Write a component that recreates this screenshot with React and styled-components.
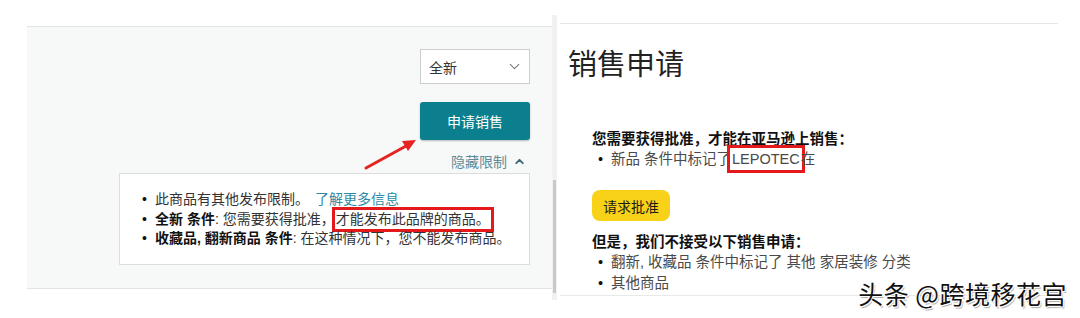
import styled, { createGlobalStyle } from "styled-components";
import { ChevronDown, ChevronUp } from "lucide-react";

const GlobalStyle = createGlobalStyle`
  html, body {
    margin: 0;
    padding: 0;
    background: #fff;
  }
  body {
    font-family: "Liberation Sans", "Noto Sans CJK SC", sans-serif;
    color: #333;
  }
`;

const Page = styled.div`
  position: relative;
  width: 1080px;
  height: 318px;
  overflow: hidden;
  display: flex;
  align-items: flex-start;
`;

/* left: listing page */
const LeftCol = styled.div`
  padding: 26px 0 0 27px;
`;

const Panel = styled.div`
  box-sizing: border-box;
  width: 525px;
  height: 263px;
  background: #f7f8f8;
  border-top: 1px solid #e4e4e4;
  border-bottom: 1px solid #e4e4e4;
  padding: 22px 22px 0 0;
  display: flex;
  flex-direction: column;
  align-items: flex-end;
`;

const Select = styled.div`
  box-sizing: border-box;
  width: 110px;
  height: 35px;
  background: #fff;
  border: 1px solid #cdcdcd;
  display: flex;
  align-items: center;
  justify-content: space-between;
  padding: 0 6px 0 8px;
  font-size: 14px;
  color: #333;
`;

const SellButton = styled.div`
  box-sizing: border-box;
  margin-top: 18px;
  width: 110px;
  height: 38px;
  border-radius: 3px;
  background: #0b7f8e;
  box-shadow: 0 1px 2px rgba(0, 0, 0, 0.25);
  color: #fff;
  font-size: 14px;
  display: flex;
  align-items: center;
  justify-content: center;
`;

const HideLink = styled.div`
  margin-top: 12px;
  margin-right: 4px;
  height: 18px;
  display: flex;
  align-items: center;
  gap: 6px;
  font-size: 14px;
  color: #5e8c99;
`;

const InfoBox = styled.div`
  box-sizing: border-box;
  margin-top: 3px;
  width: 411px;
  height: 92px;
  background: #fff;
  border: 1px solid #dcdcdc;
  padding: 16px 0 0 22px;
`;

const List = styled.ul`
  margin: 0;
  padding: 0;
  list-style: none;
`;

const Item = styled.li`
  display: flex;
  font-size: ${(p) => p.$size || "14px"};
  line-height: ${(p) => p.$lh || "19.5px"};
  color: ${(p) => p.$color || "#333"};
  white-space: nowrap;

  &::before {
    content: "•";
    color: #111;
    width: 13px;
    flex: none;
  }
`;

const Strong = styled.b`
  color: #111;
  font-weight: 700;
`;

const Link = styled.span`
  color: #2f8aa6;
  margin-left: 6px;
`;

const Marked = styled.span`
  outline: 3px solid #e3191b;
  outline-offset: ${(p) => p.$offset || "0px"};
  padding: 0 1px;
`;

/* scrollbar between the two screenshots */
const Track = styled.div`
  margin-top: 15px;
  width: 5px;
  height: 285px;
  background: #f1f1f1;
  display: flex;
  justify-content: center;
`;

const Thumb = styled.div`
  margin-top: 165px;
  width: 3px;
  height: 113px;
  background: #c9c9c9;
`;

/* right: sell request */
const RightCol = styled.div`
  box-sizing: border-box;
  margin: 23px 0 0 3px;
  width: 498px;
  height: 273px;
  border-top: 1px solid #e6e6e6;
  border-bottom: 1px solid #e9e9e9;
  padding-left: 8px;
`;

const Title = styled.h1`
  margin: 21px 0 0;
  font-size: 29px;
  line-height: 40px;
  font-weight: 400;
  color: #222;
`;

const Body = styled.div`
  padding-left: 24px;
`;

const Heading = styled.div`
  margin-top: ${(p) => p.$mt || "0px"};
  font-size: 14.5px;
  line-height: 20px;
  font-weight: 700;
  color: #111;
`;

const RightList = styled(List)`
  padding-left: 6px;
`;

const ApproveButton = styled.div`
  margin: 21px 0 11px;
  width: 78px;
  height: 31px;
  border-radius: 8px;
  background: #f8d218;
  color: #1a1a1a;
  font-size: 14px;
  display: flex;
  align-items: center;
  justify-content: center;
`;

const Arrow = styled.svg`
  position: absolute;
  left: 0;
  top: 0;
  pointer-events: none;
`;

const Watermark = styled.div`
  position: absolute;
  right: 13px;
  top: 278px;
  font-family: "Noto Sans CJK SC", sans-serif;
  font-size: 25px;
  line-height: 30px;
  color: #111;
  letter-spacing: 0.5px;
  text-shadow: 1px 1px 0 #fff, -1px -1px 0 #fff, 1px -1px 0 #fff,
    -1px 1px 0 #fff, 1.5px 1.5px 1px rgba(0, 0, 0, 0.35);
`;

export default function App() {
  return (
    <Page>
      <GlobalStyle />
      <LeftCol>
        <Panel>
          <Select>
            <span>全新</span>
            <ChevronDown size={17} color="#7a7a7a" strokeWidth={1.6} />
          </Select>
          <SellButton>申请销售</SellButton>
          <HideLink>
            隐藏限制
            <ChevronUp size={13} color="#3f6877" strokeWidth={3.5} />
          </HideLink>
          <InfoBox>
            <List>
              <Item>
                此商品有其他发布限制。<Link>了解更多信息</Link>
              </Item>
              <Item>
                <Strong>全新 条件</Strong>: 您需要获得批准，
                <Marked>才能发布此品牌的商品。</Marked>
              </Item>
              <Item>
                <Strong>收藏品, 翻新商品 条件</Strong>: 在这种情况下，您不能发布商品。
              </Item>
            </List>
          </InfoBox>
        </Panel>
      </LeftCol>

      <Track>
        <Thumb />
      </Track>

      <RightCol>
        <Title>销售申请</Title>
        <Body>
          <Heading $mt="44px">您需要获得批准，才能在亚马逊上销售：</Heading>
          <RightList>
            <Item $size="14.5px" $lh="20px" $color="#4a4a4a">
              新品 条件中标记了 <Marked $offset="1px">LEPOTEC</Marked> 在
            </Item>
          </RightList>
          <ApproveButton>请求批准</ApproveButton>
          <Heading>但是，我们不接受以下销售申请：</Heading>
          <RightList>
            <Item $size="14.5px" $lh="21px" $color="#4a4a4a">
              翻新, 收藏品 条件中标记了 其他 家居装修 分类
            </Item>
            <Item $size="14.5px" $lh="21px" $color="#4a4a4a">
              其他商品
            </Item>
          </RightList>
        </Body>
      </RightCol>

      <Arrow width="1080" height="318" viewBox="0 0 1080 318">
        <line x1="366" y1="168" x2="406" y2="146" stroke="#e52421" strokeWidth="3" strokeLinecap="round" />
        <polygon points="416,140 402,141 408,151" fill="#e52421" />
      </Arrow>

      <Watermark>头条 @跨境移花宫</Watermark>
    </Page>
  );
}
